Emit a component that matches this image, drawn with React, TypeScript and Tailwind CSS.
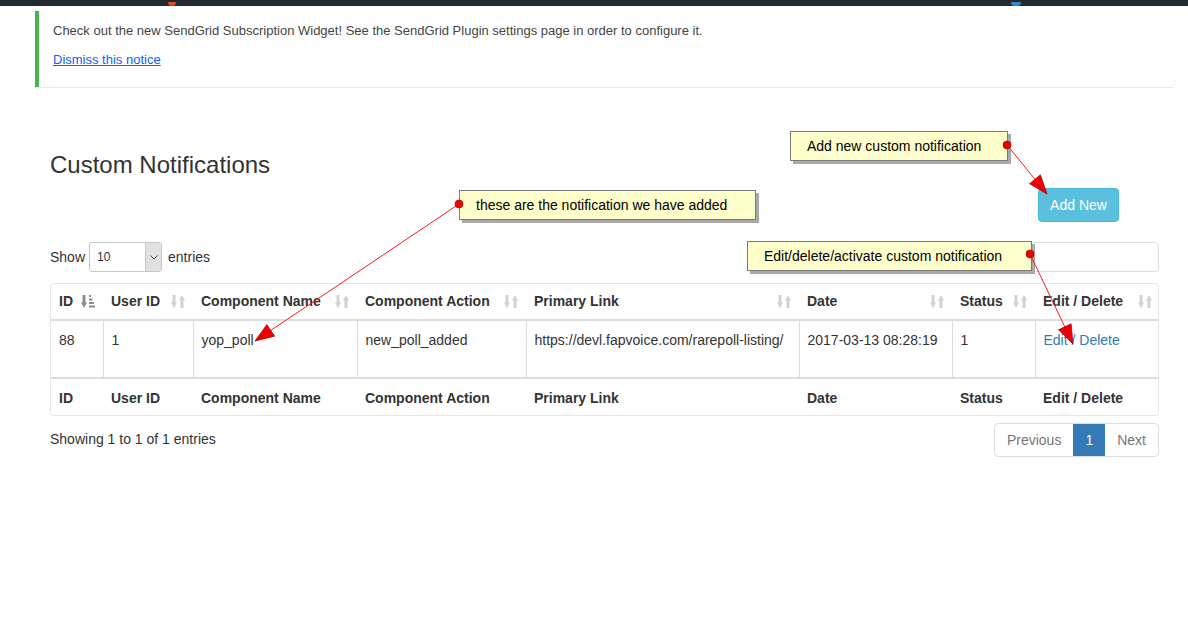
import React from 'react';

const font = { fontFamily: '"Liberation Sans", Arial, sans-serif' };

interface Callout {
  text: string;
  box: string;
  from: [number, number];
  to: [number, number];
}

const callouts: Callout[] = [
  {
    text: 'Add new custom notification',
    box: 'left-[790px] top-[131px] w-[218px]',
    from: [1007, 145],
    to: [1047, 194],
  },
  {
    text: 'these are the notification we have added',
    box: 'left-[459px] top-[190px] w-[297px]',
    from: [459, 204],
    to: [255, 341],
  },
  {
    text: 'Edit/delete/activate custom notification',
    box: 'left-[747px] top-[241px] w-[285px]',
    from: [1030, 254],
    to: [1073, 344],
  },
];

const columns = [
  { label: 'ID', w: 'w-[52px]', sorted: true },
  { label: 'User ID', w: 'w-[90px]' },
  { label: 'Component Name', w: 'w-[164px]' },
  { label: 'Component Action', w: 'w-[169px]' },
  { label: 'Primary Link', w: 'w-[273px]' },
  { label: 'Date', w: 'w-[153px]' },
  { label: 'Status', w: 'w-[83px]' },
  { label: 'Edit / Delete', w: 'w-[125px]' },
];

function arrowHead(from: [number, number], to: [number, number], len = 19, half = 7) {
  const dx = to[0] - from[0];
  const dy = to[1] - from[1];
  const l = Math.sqrt(dx * dx + dy * dy);
  const ux = dx / l;
  const uy = dy / l;
  const bx = to[0] - ux * len;
  const by = to[1] - uy * len;
  const px = -uy;
  const py = ux;
  return `${to[0]},${to[1]} ${bx + px * half},${by + py * half} ${bx - px * half},${by - py * half}`;
}

const SortIcon = ({ sorted }: { sorted?: boolean }) =>
  sorted ? (
    <svg width="14" height="15" viewBox="0 0 14 15" className="shrink-0">
      <g fill="#8c8c8c">
        <rect x="1.5" y="1" width="3" height="8" />
        <polygon points="0,8.5 6,8.5 3,14" />
        <rect x="8" y="1" width="2" height="2" />
        <rect x="8" y="4.5" width="3.5" height="2" />
        <rect x="8" y="8" width="5" height="2" />
        <rect x="8" y="11.5" width="6" height="2" />
      </g>
    </svg>
  ) : (
    <svg width="14" height="15" viewBox="0 0 14 15" className="shrink-0">
      <g fill="#d2d2d2">
        <rect x="1.5" y="1" width="3" height="8" />
        <polygon points="0,8.5 6,8.5 3,14" />
        <rect x="9.5" y="6" width="3" height="8" />
        <polygon points="8,6.5 14,6.5 11,1" />
      </g>
    </svg>
  );

const App = () => {
  return (
    <div className="relative min-h-[626px] w-full bg-white text-[14px] text-[#333]" style={font}>
      <div className="relative h-[6px] bg-[#23282d]">
        <span className="absolute left-[168px] top-[2px] h-[4px] w-[8px] rounded-b-full bg-[#d54e21]" />
        <span className="absolute left-[1011px] top-[2px] h-[4px] w-[10px] rounded-b-full bg-[#2c8bc8]" />
      </div>

      <div className="ml-[35px] mr-[14px]">
        <div className="mt-[5px] h-[76px] border-l-4 border-[#46b450] bg-white pl-[14px] pt-[10px] shadow-[0_1px_1px_rgba(0,0,0,0.08)] text-[13px] text-[#444]">
          <p className="leading-[20px]">
            Check out the new SendGrid Subscription Widget! See the SendGrid Plugin settings page in order to configure it.
          </p>
          <p className="mt-[9px] leading-[20px]">
            <a className="text-[#0b63f6] underline">Dismiss this notice</a>
          </p>
        </div>

        <div className="px-[15px]">
          <h3 className="mt-[65px] text-[24px] leading-[26px] text-[#333]">Custom Notifications</h3>

          <div className="mt-[10px] flex justify-end pr-[40px]">
            <button className="h-[34px] w-[81px] rounded-[4px] border border-[#46b8da] bg-[#5bc0de] text-[14px] text-white">
              Add New
            </button>
          </div>

          <div className="mt-[20px] flex h-[30px] items-center justify-between">
            <div className="flex items-center">
              <span>Show</span>
              <div className="ml-[4px] flex h-[30px] w-[73px] items-stretch rounded-[3px] border border-[#c8c8c8] bg-white">
                <span className="flex flex-1 items-center pl-[7px] text-[12px] text-[#333]">10</span>
                <span className="flex w-[16px] items-center justify-center border-l border-[#c8c8c8] bg-[#e1e1e1]">
                  <svg width="8" height="5" viewBox="0 0 8 5">
                    <polyline points="0.5,0.5 4,4 7.5,0.5" fill="none" stroke="#444" strokeWidth="1" />
                  </svg>
                </span>
              </div>
              <span className="ml-[6px]">entries</span>
            </div>
            <input className="h-[30px] w-[200px] rounded-[4px] border border-[#ddd] bg-white px-2 outline-none" />
          </div>

          <div className="mt-[11px] overflow-hidden rounded-[4px] border border-[#e6e6e6]">
            <table className="w-full table-fixed border-collapse">
              <thead>
                <tr className="border-b-2 border-[#ddd]">
                  {columns.map((c) => (
                    <th key={c.label} className={`${c.w} h-[36px] px-[8px] text-left font-bold`}>
                      <div className="flex items-center justify-between">
                        <span>{c.label}</span>
                        <SortIcon sorted={c.sorted} />
                      </div>
                    </th>
                  ))}
                </tr>
              </thead>
              <tbody>
                <tr className="border-b-2 border-[#ddd] align-top">
                  <td className="h-[58px] border-r border-[#ddd] px-[8px] pt-[9px] leading-[20px]">88</td>
                  <td className="border-r border-[#ddd] px-[8px] pt-[9px] leading-[20px]">1</td>
                  <td className="border-r border-[#ddd] px-[8px] pt-[9px] leading-[20px]">yop_poll</td>
                  <td className="border-r border-[#ddd] px-[8px] pt-[9px] leading-[20px]">new_poll_added</td>
                  <td className="border-r border-[#ddd] px-[8px] pt-[9px] leading-[20px]">https://devl.fapvoice.com/rarepoll-listing/</td>
                  <td className="border-r border-[#ddd] px-[8px] pt-[9px] leading-[20px]">2017-03-13 08:28:19</td>
                  <td className="border-r border-[#ddd] px-[8px] pt-[9px] leading-[20px]">1</td>
                  <td className="px-[8px] pt-[9px] leading-[20px] text-[#337ab7]">
                    <a>Edit</a> / <a>Delete</a>
                  </td>
                </tr>
              </tbody>
              <tfoot>
                <tr>
                  {columns.map((c) => (
                    <th key={c.label} className="h-[37px] px-[8px] pt-[2px] text-left font-bold">
                      {c.label}
                    </th>
                  ))}
                </tr>
              </tfoot>
            </table>
          </div>

          <div className="mt-[7px] flex items-center justify-between">
            <span className="pb-[1px]">Showing 1 to 1 of 1 entries</span>
            <div className="flex h-[34px] overflow-hidden rounded-[4px] border border-[#ddd]">
              <span className="flex items-center px-[12px] text-[#777]">Previous</span>
              <span className="flex items-center bg-[#337ab7] px-[12px] text-white">1</span>
              <span className="flex items-center px-[12px] text-[#777]">Next</span>
            </div>
          </div>
        </div>
      </div>

      {callouts.map((c) => (
        <div
          key={c.text}
          className={`absolute ${c.box} flex h-[30px] items-center border border-[#7a7a7a] bg-[#ffffcc] pl-[16px] text-[14px] text-black shadow-[3px_3px_0_#a9a9a9]`}
        >
          {c.text}
        </div>
      ))}

      <svg className="pointer-events-none absolute left-0 top-0" width="1188" height="626">
        {callouts.map((c) => (
          <g key={c.text}>
            <line x1={c.from[0]} y1={c.from[1]} x2={c.to[0]} y2={c.to[1]} stroke="#ff1a1a" strokeWidth="1" />
            <polygon points={arrowHead(c.from, c.to)} fill="#ee0000" stroke="#a00000" strokeWidth="0.7" />
            <circle cx={c.from[0]} cy={c.from[1]} r="4" fill="#ee0000" stroke="#a00000" strokeWidth="0.6" />
          </g>
        ))}
      </svg>
    </div>
  );
};

export default App;
